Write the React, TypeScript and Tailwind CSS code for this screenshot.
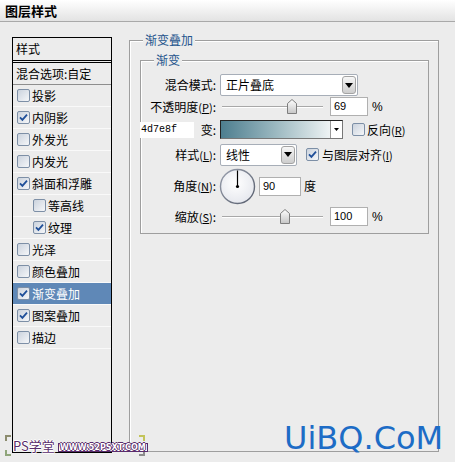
import React from "react";

const items = [
  { label: "投影", checked: false },
  { label: "内阴影", checked: true },
  { label: "外发光", checked: false },
  { label: "内发光", checked: false },
  { label: "斜面和浮雕", checked: true },
  { label: "等高线", checked: false, indent: true },
  { label: "纹理", checked: true, indent: true },
  { label: "光泽", checked: false },
  { label: "颜色叠加", checked: false },
  { label: "渐变叠加", checked: true, active: true },
  { label: "图案叠加", checked: true },
  { label: "描边", checked: false },
];

const CheckBox = ({ checked }: { checked: boolean }) => (
  <svg width="13" height="13" viewBox="0 0 13 13" className="shrink-0">
    <defs>
      <linearGradient id="cbfill" x1="0" y1="0" x2="1" y2="1">
        <stop offset="0" stopColor="#c9d1dc" />
        <stop offset="1" stopColor="#f7f8fa" />
      </linearGradient>
    </defs>
    <rect x="0.5" y="0.5" width="12" height="12" rx="1.5" fill="url(#cbfill)" stroke="#7d8fa6" />
    {checked && (
      <path d="M3 6.3 L5.4 8.8 L10 3.6" stroke="#1f4f99" strokeWidth="1.8" fill="none" />
    )}
  </svg>
);

const Slider = ({ pos }: { pos: number }) => (
  <svg width="101" height="16" viewBox="0 0 101 16" className="shrink-0">
    <defs>
      <linearGradient id="thumb" x1="0" y1="0" x2="0" y2="1">
        <stop offset="0" stopColor="#ffffff" />
        <stop offset="1" stopColor="#c6c6c6" />
      </linearGradient>
    </defs>
    <line x1="0" y1="7.5" x2="101" y2="7.5" stroke="#a8a8a8" />
    <line x1="0" y1="8.5" x2="101" y2="8.5" stroke="#ffffff" />
    <polygon
      points={`${pos - 4.5},4.5 ${pos},0.5 ${pos + 4.5},4.5 ${pos + 4.5},14.5 ${pos - 4.5},14.5`}
      fill="url(#thumb)"
      stroke="#7e7e7e"
    />
  </svg>
);

const Arrow = () => (
  <svg width="8" height="5" viewBox="0 0 8 5">
    <path d="M0 0 H8 L4 5 Z" fill="#000" />
  </svg>
);

const Select = ({ value, width }: { value: string; width: string }) => (
  <div className={`${width} h-[22px] bg-white border border-[#a7aeb8] rounded-[2px] flex items-center shrink-0`}>
    <span className="pl-[5px]">{value}</span>
    <div className="ml-auto mr-[1px] w-[14px] h-[18px] rounded-[3px] border border-[#a3a3a3] bg-gradient-to-b from-[#f7f7f7] to-[#cdcdcd] flex items-center justify-center">
      <Arrow />
    </div>
  </div>
);

const NumBox = ({ value, width }: { value: string; width: string }) => (
  <div className={`${width} h-[19px] bg-white border border-[#b0b0b0] flex items-center pl-[3px] font-['Liberation_Sans',sans-serif] text-[11px] shrink-0`}>
    {value}
  </div>
);

const Hot = ({ k }: { k: string }) => (
  <span className="text-[11px]">
    (<span className="underline">{k}</span>)
  </span>
);

export default function App() {
  return (
    <div className="w-[455px] h-[462px] bg-[#ececec] relative overflow-hidden font-['Noto_Sans_CJK_SC',sans-serif] text-[12px] text-black">
      {/* title bar */}
      <div className="h-[22px] bg-gradient-to-b from-white to-[#e3e3e3] border-b border-[#a9a9a9] pl-[5px] flex items-center font-bold text-[13px]">
        图层样式
      </div>

      <div className="flex items-start">
        {/* style list */}
        <div className="ml-[12px] mt-[15px] w-[100px] h-[416px] border border-black flex flex-col">
          <div className="h-[23px] border-b border-black flex items-center pl-[3px]">样式</div>
          <div className="h-[2px] border-b border-black" />
          <div className="h-[22px] border-b border-[#8e8e8e] flex items-center pl-[3px] whitespace-nowrap">
            混合选项:自定
          </div>
          {items.map((it) => (
            <div
              key={it.label}
              className={`h-[22px] border-b border-[#f9f9f9] flex items-center gap-[2px] whitespace-nowrap ${
                it.indent ? "pl-[20px]" : "pl-[4px]"
              } ${it.active ? "bg-[#5f88b7] text-white" : ""}`}
            >
              <CheckBox checked={it.checked} />
              <span>{it.label}</span>
            </div>
          ))}
        </div>

        {/* gradient overlay group */}
        <div className="ml-[17px] mt-[18px] w-[310px] h-[412px] border border-[#9e9e9e] shadow-[inset_1px_1px_0_#fff] relative">
          <span className="absolute left-[13px] top-[-9px] px-[2px] bg-[#ececec] text-[#24548c] leading-[16px]">
            渐变叠加
          </span>

          <div className="ml-[10px] mt-[19px] w-[289px] h-[174px] border border-[#9e9e9e] shadow-[inset_1px_1px_0_#fff] relative flex flex-col">
            <span className="absolute left-[13px] top-[-9px] px-[2px] bg-[#ececec] text-[#24548c] leading-[16px]">
              渐变
            </span>

            {/* blend mode */}
            <div className="mt-[13px] h-[22px] flex items-center">
              <div className="w-[75px] text-right">混合模式:</div>
              <div className="ml-[4px]">
                <Select value="正片叠底" width="w-[138px]" />
              </div>
            </div>

            {/* opacity */}
            <div className="h-[21px] flex items-center">
              <div className="w-[75px] text-right whitespace-nowrap">
                不透明度<Hot k="P" />:
              </div>
              <div className="ml-[6px] flex items-center">
                <Slider pos={70} />
              </div>
              <div className="ml-[7px]">
                <NumBox value="69" width="w-[38px]" />
              </div>
              <span className="ml-[4px] font-['Liberation_Sans',sans-serif]">%</span>
            </div>

            {/* gradient */}
            <div className="mt-[2px] h-[21px] flex items-center">
              <div className="-ml-[1px] w-[54px] h-[16px] bg-white flex items-center pl-[1px] font-['Liberation_Mono',monospace] text-[10px]">
                4d7e8f
              </div>
              <div className="w-[22px] text-right">变:</div>
              <div className="ml-[4px] w-[123px] h-[19px] border border-t-[#222] border-l-[#222] border-r-[#777] border-b-[#777] flex">
                <div className="flex-1 bg-gradient-to-r from-[#4d7e8f] via-[#9bb8c0] to-[#eef3f4]" />
                <div className="w-[12px] bg-white border-l border-[#999] flex items-center justify-center">
                  <svg width="5" height="3" viewBox="0 0 5 3">
                    <path d="M0 0 H5 L2.5 3 Z" fill="#000" />
                  </svg>
                </div>
              </div>
              <div className="ml-[9px] flex items-center gap-[2px] whitespace-nowrap">
                <CheckBox checked={false} />
                <span>
                  反向<Hot k="R" />
                </span>
              </div>
            </div>

            {/* style */}
            <div className="mt-[3px] h-[23px] flex items-center">
              <div className="w-[75px] text-right whitespace-nowrap">
                样式<Hot k="L" />:
              </div>
              <div className="ml-[4px]">
                <Select value="线性" width="w-[77px]" />
              </div>
              <div className="ml-[9px] flex items-center gap-[3px] whitespace-nowrap">
                <CheckBox checked={true} />
                <span>
                  与图层对齐<Hot k="I" />
                </span>
              </div>
            </div>

            {/* angle */}
            <div className="h-[40px] flex items-center">
              <div className="w-[75px] text-right whitespace-nowrap">
                角度<Hot k="N" />:
              </div>
              <svg width="37" height="37" viewBox="0 0 37 37" className="ml-[3px] shrink-0">
                <defs>
                  <linearGradient id="dialring" x1="0" y1="0" x2="1" y2="1">
                    <stop offset="0" stopColor="#9aa0ae" />
                    <stop offset="1" stopColor="#555c6b" />
                  </linearGradient>
                  <radialGradient id="dialfill" cx="0.45" cy="0.4" r="0.6">
                    <stop offset="0" stopColor="#ffffff" />
                    <stop offset="1" stopColor="#e6e8ee" />
                  </radialGradient>
                </defs>
                <circle cx="18.5" cy="18.5" r="17" fill="url(#dialfill)" stroke="url(#dialring)" strokeWidth="1.4" />
                <line x1="18.5" y1="18.5" x2="18.5" y2="2.5" stroke="#000" strokeWidth="1.2" />
                <circle cx="18.5" cy="18.5" r="1.6" fill="#000" />
              </svg>
              <div className="ml-[3px]">
                <NumBox value="90" width="w-[42px]" />
              </div>
              <span className="ml-[3px]">度</span>
            </div>

            {/* scale */}
            <div className="h-[21px] flex items-center">
              <div className="w-[75px] text-right whitespace-nowrap">
                缩放<Hot k="S" />:
              </div>
              <div className="ml-[6px] flex items-center">
                <Slider pos={63} />
              </div>
              <div className="ml-[7px]">
                <NumBox value="100" width="w-[38px]" />
              </div>
              <span className="ml-[4px] font-['Liberation_Sans',sans-serif]">%</span>
            </div>
          </div>
        </div>
      </div>

      {/* watermarks */}
      <div className="absolute left-[5px] top-[435px] w-[140px] h-[21px]">
        <span className="absolute left-0 top-0 w-[6px] h-[6px] border-l-2 border-t-2 border-[#8c8c6e]" />
        <span className="absolute left-0 bottom-0 w-[6px] h-[6px] border-l-2 border-b-2 border-[#8fa57a]" />
        <span className="absolute right-0 top-0 w-[6px] h-[6px] border-r-2 border-t-2 border-[#c3c45a]" />
        <span className="absolute right-0 bottom-0 w-[6px] h-[6px] border-r-2 border-b-2 border-[#8c8c8c]" />
        <span className="absolute left-[8px] top-[3px] text-[13px] leading-[16px] text-[#5a2c6c] [text-shadow:1px_0_0_#fff,-1px_0_0_#fff,0_1px_0_#fff,0_-1px_0_#fff]">
          PS学堂
        </span>
        <span className="absolute left-[53px] top-[8px] h-[9px] px-[1px] border border-[#5a2c6c] bg-white text-[8px] leading-[8px] font-bold text-white font-['DejaVu_Sans',sans-serif] [text-shadow:1px_0_0_#5a2c6c,-1px_0_0_#5a2c6c,0_1px_0_#5a2c6c,0_-1px_0_#5a2c6c]">
          WWW.52PSXT.COM
        </span>
      </div>
      <div className="absolute left-[284px] top-[422px] font-['DejaVu_Sans',sans-serif] text-[32px] leading-[32px] text-[#1d6cc6]">
        UiBQ.CoM
      </div>
    </div>
  );
}
